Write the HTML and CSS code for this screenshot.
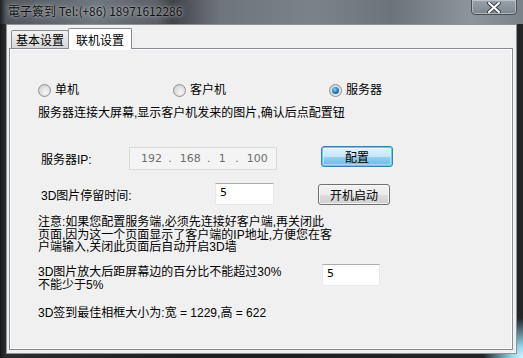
FILE: index.html
```html
<!DOCTYPE html>
<html lang="zh-CN">
<head>
  <meta charset="UTF-8">
  <title>電子簽到</title>
  <link rel="stylesheet" href="styles.css">
</head>
<body>
  <div class="window">
    <div class="titlebar">
      <span class="title">電子簽到 Tel:(+86) 18971612286</span>
      <div class="close">
        <svg width="14" height="11" viewBox="0 0 14 11">
          <path d="M2 1 L12 10 M12 1 L2 10" stroke="#3a3f44" stroke-width="4" stroke-linecap="round"/>
          <path d="M2 1 L12 10 M12 1 L2 10" stroke="#fff" stroke-width="2" stroke-linecap="round"/>
        </svg>
      </div>
    </div>

    <div class="client">
      <div class="tabs">
        <div class="tab">基本设置</div>
        <div class="tab active">联机设置</div>
      </div>

      <div class="panel">
        <div class="radio-row">
          <label class="radio col1"><span class="dot"></span>单机</label>
          <label class="radio col2"><span class="dot"></span>客户机</label>
          <label class="radio"><span class="dot checked"></span>服务器</label>
        </div>

        <div class="hint">服务器连接大屏幕,显示客户机发来的图片,确认后点配置钮</div>

        <div class="ip-row">
          <span class="label ip-label">服务器IP:</span>
          <div class="ipbox">
            <span>192</span><span>.</span><span>168</span><span>.</span><span>1</span><span>.</span><span>100</span>
          </div>
          <button class="btn default">配置</button>
        </div>

        <div class="time-row">
          <span class="label time-label">3D图片停留时间:</span>
          <div class="field w59">5</div>
          <button class="btn">开机启动</button>
        </div>

        <div class="note">
          注意:如果您配置服务端,必须先连接好客户端,再关闭此<br>
          页面,因为这一个页面显示了客户端的IP地址,方便您在客<br>
          户端输入,关闭此页面后自动开启3D墙
        </div>

        <div class="pct-row">
          <div class="pct-text">3D图片放大后距屏幕边的百分比不能超过30%<br>不能少于5%</div>
          <div class="field w58">5</div>
        </div>

        <div class="size">3D签到最佳相框大小为:宽 = 1229,高 = 622</div>
      </div>
    </div>
  </div>
</body>
</html>
```

FILE: styles.css
```css
body {
  margin: 0;
  font-family: "Liberation Sans", "Noto Sans CJK SC", sans-serif;
  font-size: 12px;
  color: #000;
}

.window {
  width: 523px;
  height: 358px;
  display: flex;
  flex-direction: column;
  background:
    radial-gradient(circle at 100% 100%, #d8f4fb 0, #8fd3ea 12px, rgba(40, 60, 70, 0) 40px),
    linear-gradient(90deg, #161718 0, #2a2c2e 5px, #1d1e1f 40%, #232526 100%);
  overflow: hidden;
}

.titlebar {
  height: 24px;
  display: flex;
  align-items: flex-start;
  justify-content: space-between;
  background: linear-gradient(90deg, #1e2022 0, #4e555b 6px, #6f777e 18%, #5a6066 30%, #3f4448 33%, #6d757c 42%, #7a838a 60%, #6c747b 75%, #8c959c 90%, #7a838a 100%);
}

.title {
  margin: 3px 0 0 8px;
  font-family: "Noto Sans CJK SC", sans-serif;
  font-size: 12px;
  line-height: 16px;
  color: #111;
  text-shadow: 0 0 6px rgba(255, 255, 255, 0.6), 0 0 2px rgba(255, 255, 255, 0.5);
}

.close {
  width: 44px;
  height: 14px;
  margin-right: 6px;
  margin-top: -1px;
  display: flex;
  align-items: center;
  justify-content: center;
  border: 1px solid #4a5056;
  border-radius: 0 0 4px 4px;
  box-shadow: inset 0 0 0 1px rgba(255, 255, 255, 0.35);
  background: linear-gradient(#9aa3aa, #7d868d);
}

.client {
  margin: 0 6px 4px 6px;
  flex: 1;
  display: flex;
  flex-direction: column;
  padding: 3px 3px 3px 2px;
  border: 1px solid #8c9399;
  background: #f0f0f0;
}

.tabs {
  display: flex;
  height: 20px;
  padding-left: 2px;
  font-family: "Noto Sans CJK SC", sans-serif;
}

.tab {
  margin-top: 2px;
  height: 18px;
  width: 58px;
  box-sizing: border-box;
  border: 1px solid #898c95;
  border-bottom: none;
  border-radius: 2px 2px 0 0;
  background: linear-gradient(#f2f2f2, #e3e3e3 50%, #d6d6d6);
  font-size: 12px;
  line-height: 18px;
  text-align: center;
}

.tab.active {
  margin-top: 0;
  height: 21px;
  width: 64px;
  margin-left: -1px;
  margin-bottom: -1px;
  background: #fff;
  line-height: 21px;
  position: relative;
  z-index: 1;
}

.panel {
  flex: 1;
  border: 1px solid #898c95;
  box-shadow: inset 0 0 0 1px #fff;
  background: #f0f0f0;
  padding-left: 28px;
  display: flex;
  flex-direction: column;
  align-items: flex-start;
  font-family: "Liberation Sans", "Noto Sans CJK SC", sans-serif;
}

.radio-row {
  margin-top: 34px;
  height: 14px;
  display: flex;
  align-items: center;
}

.radio {
  display: flex;
  align-items: center;
  line-height: 14px;
}

.col1 { width: 135px; }
.col2 { width: 156px; }

.dot {
  width: 11px;
  height: 11px;
  margin-right: 4px;
  border: 1px solid #8f8f8f;
  border-radius: 50%;
  background: radial-gradient(circle at 60% 65%, #f6f6f6 0, #e2e2e2 45%, #c9c9c9 100%);
  display: flex;
  align-items: center;
  justify-content: center;
}

.dot.checked::after {
  content: "";
  width: 7px;
  height: 7px;
  border-radius: 50%;
  background: radial-gradient(circle at 40% 35%, #8fd6ff 0, #2a86c8 45%, #0d3f66 100%);
}

.hint {
  margin-top: 9px;
  line-height: 14px;
}

.ip-row {
  margin-top: 26px;
  height: 24px;
  display: flex;
  align-items: flex-start;
}

.label {
  padding-left: 3px;
  line-height: 14px;
}

.ip-label {
  width: 88px;
  margin-top: 7px;
}

.ipbox {
  margin-top: 1px;
  width: 148px;
  height: 23px;
  box-sizing: border-box;
  border: 1px solid #d9d9d9;
  background: #f4f4f4;
  color: #6d6d6d;
  display: flex;
  align-items: center;
  padding-left: 11px;
  gap: 0;
  font-family: "DejaVu Sans", sans-serif;
  font-size: 11px;
}

.ipbox span:nth-child(odd) { width: 30px; text-align: left; }
.ipbox span:nth-child(1) { width: 28px; }
.ipbox span:nth-child(3) { width: 28px; }
.ipbox span:nth-child(5) { width: 17px; }
.ipbox span:nth-child(even) { width: 12px; }

.btn {
  width: 72px;
  height: 21px;
  margin-left: 44px;
  padding: 0;
  border: 1px solid #707070;
  border-radius: 3px;
  box-shadow: inset 0 0 0 1px rgba(255, 255, 255, 0.7);
  background: linear-gradient(#f2f2f2 0, #ebebeb 50%, #dddddd 51%, #cfcfcf 100%);
  font-family: "Noto Sans CJK SC", sans-serif;
  font-size: 12px;
  line-height: 17px;
  color: #000;
}

.btn.default {
  border-color: #3c7fb1;
  background: linear-gradient(#e5f4fc 0, #c4e5f6 50%, #98d1ef 51%, #6ab8e2 100%);
  box-shadow: inset 0 0 0 1px #48d7fb, inset 0 0 0 2px rgba(255, 255, 255, 0.4);
}

.time-row {
  margin-top: 13px;
  height: 22px;
  display: flex;
  align-items: flex-start;
}

.time-label {
  width: 174px;
  margin-top: 6px;
}

.field {
  height: 22px;
  box-sizing: border-box;
  border: 1px solid #e3e9ef;
  border-top-color: #abadb3;
  background: #fff;
  padding: 2px 0 0 4px;
  line-height: 14px;
  font-family: "DejaVu Sans", sans-serif;
  font-size: 11px;
}

.w59 { width: 59px; }
.w58 { width: 58px; }

.time-row .btn {
  margin-top: 1px;
}

.note {
  margin-top: 11px;
  line-height: 12.5px;
}

.pct-row {
  margin-top: 10px;
  height: 28px;
  display: flex;
  align-items: flex-start;
}

.pct-text {
  width: 284px;
  margin-top: 2px;
  line-height: 13px;
}

.size {
  margin-top: 14px;
  line-height: 14px;
}
```
